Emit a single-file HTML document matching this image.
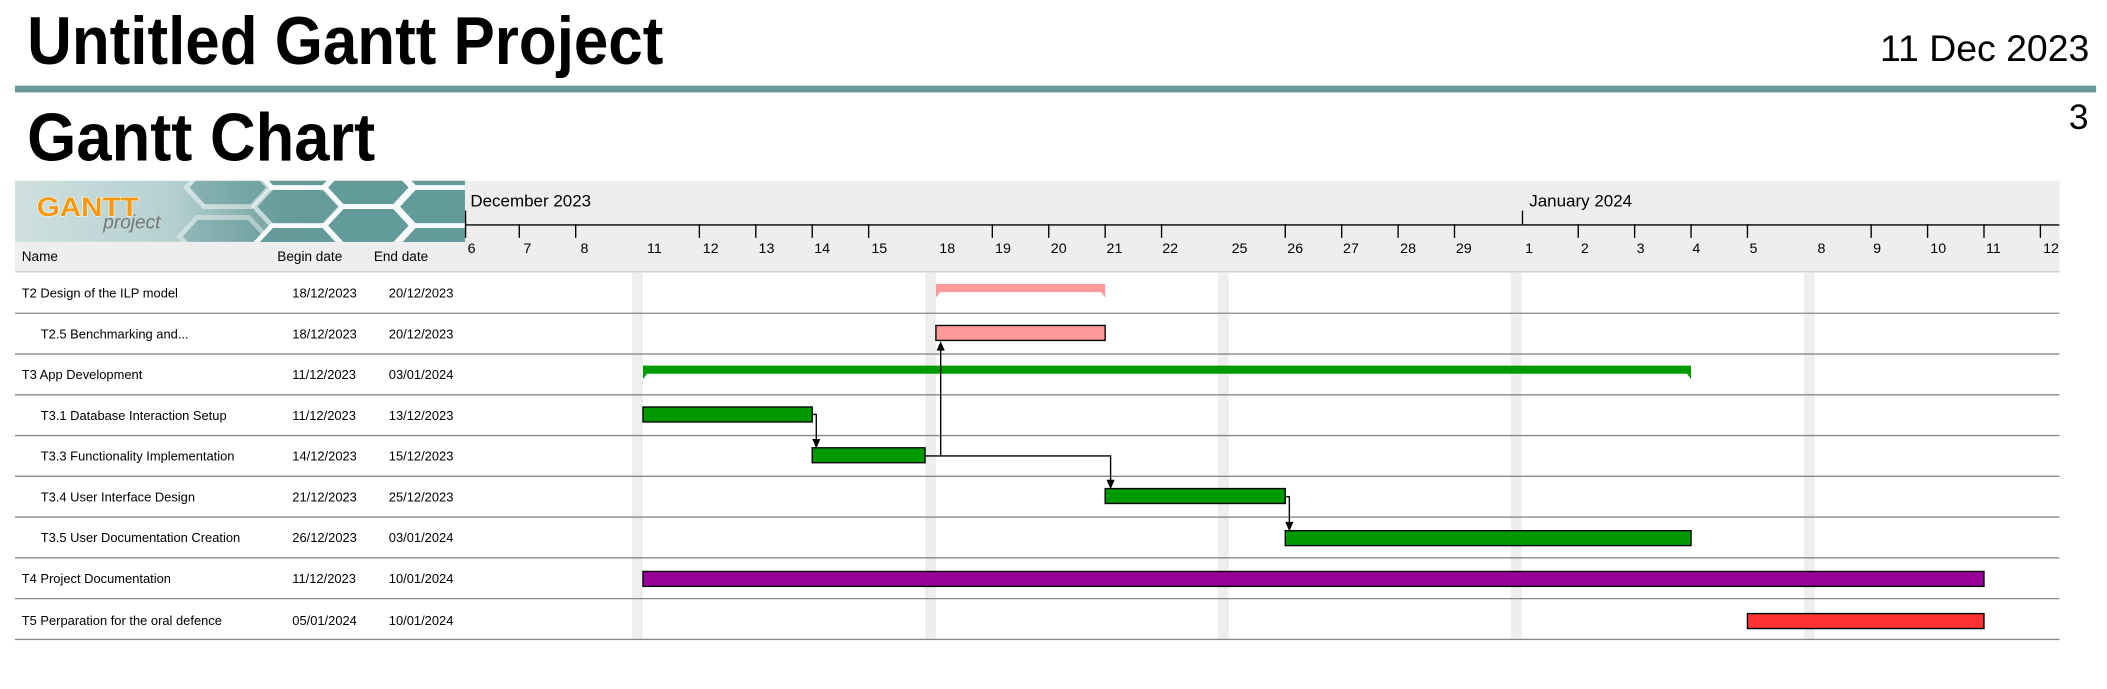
<!DOCTYPE html>
<html><head><meta charset="utf-8"><style>
html,body{margin:0;padding:0;background:#fff;width:2107px;height:689px;overflow:hidden}
svg{display:block}
text{font-family:"Liberation Sans",Arial,sans-serif}
</style></head><body>
<svg width="2107" height="689" viewBox="0 0 1550 507" preserveAspectRatio="none" xmlns="http://www.w3.org/2000/svg">
<defs>
<linearGradient id="lg" x1="0" x2="1" y1="0" y2="0">
<stop offset="0" stop-color="#cfe0e0"/><stop offset="0.35" stop-color="#b6d0d0"/><stop offset="0.6" stop-color="#6f9f9f"/><stop offset="1" stop-color="#629797"/></linearGradient>
<clipPath id="lc"><rect x="11" y="133" width="331" height="45"/></clipPath>
</defs>
<text x="20" y="47" font-size="50" font-weight="bold" textLength="468" lengthAdjust="spacingAndGlyphs">Untitled Gantt Project</text>
<text x="1383" y="45" font-size="27" textLength="154" lengthAdjust="spacingAndGlyphs">11 Dec 2023</text>
<rect x="11" y="63" width="1531" height="5" fill="#669999"/>
<text x="20" y="118" font-size="50" font-weight="bold" textLength="256" lengthAdjust="spacingAndGlyphs">Gantt Chart</text>
<text x="1522" y="95" font-size="26">3</text>
<rect x="11" y="133" width="1504" height="67" fill="#eeeeee"/>
<line x1="11" y1="200" x2="1515" y2="200" stroke="#cccccc" stroke-width="1"/>
<g clip-path="url(#lc)">
<rect x="11" y="133" width="331" height="45" fill="url(#lg)"/>
<g fill="#649a9a" stroke="#ffffff" stroke-width="3.5" opacity="0.95">
<polygon points="150,124 185,124 198,138 185,152 150,152 137,138" opacity="0.5"/>
<polygon points="200,138 238,138 251,152 238,166 200,166 187,152" opacity="0.6"/>
<polygon points="145,160 183,160 196,174 183,188 145,188 132,174" opacity="0.4"/>
<polygon points="252,124 290,124 303,138 290,152 252,152 239,138"/>
<polygon points="305,138 343,138 356,152 343,166 305,166 292,152"/>
<polygon points="252,152 290,152 303,166 290,180 252,180 239,166"/>
<polygon points="200,166 238,166 251,180 238,194 200,194 187,180"/>
<polygon points="200,110 238,110 251,124 238,138 200,138 187,124"/>
<polygon points="305,110 343,110 356,124 343,138 305,138 292,124"/>
<polygon points="305,166 343,166 356,180 343,194 305,194 292,180"/>
</g>
<text x="27" y="159" font-size="20" font-weight="bold" fill="#f59a10" stroke="#fff" stroke-width="0.8" paint-order="stroke" textLength="75" lengthAdjust="spacingAndGlyphs">GANTT</text>
<text x="76" y="168" font-size="14" font-style="italic" fill="#777" font-family="Liberation Serif,serif">project</text>
</g>
<text x="16" y="192" font-size="10">Name</text>
<text x="204" y="192" font-size="10">Begin date</text>
<text x="275" y="192" font-size="10">End date</text>
<text x="346" y="152" font-size="12.5">December 2023</text>
<text x="1125" y="152" font-size="12.5">January 2024</text>
<line x1="342" y1="165.5" x2="1515" y2="165.5" stroke="#000" stroke-width="1"/>
<line x1="342.5" y1="155" x2="342.5" y2="175" stroke="#000" stroke-width="1"/>
<line x1="1120" y1="155" x2="1120" y2="165" stroke="#000" stroke-width="1"/>
<g stroke="#000" stroke-width="1">
<line x1="382" y1="165" x2="382" y2="175"/><line x1="423.5" y1="165" x2="423.5" y2="175"/>
<line x1="514.5" y1="165" x2="514.5" y2="175"/><line x1="556" y1="165" x2="556" y2="175"/><line x1="597.5" y1="165" x2="597.5" y2="175"/><line x1="639" y1="165" x2="639" y2="175"/>
<line x1="730" y1="165" x2="730" y2="175"/><line x1="771.5" y1="165" x2="771.5" y2="175"/><line x1="813" y1="165" x2="813" y2="175"/><line x1="854.5" y1="165" x2="854.5" y2="175"/>
<line x1="945.5" y1="165" x2="945.5" y2="175"/><line x1="987" y1="165" x2="987" y2="175"/><line x1="1028.5" y1="165" x2="1028.5" y2="175"/><line x1="1070" y1="165" x2="1070" y2="175"/>
<line x1="1161" y1="165" x2="1161" y2="175"/><line x1="1202.5" y1="165" x2="1202.5" y2="175"/><line x1="1244" y1="165" x2="1244" y2="175"/><line x1="1285.5" y1="165" x2="1285.5" y2="175"/>
<line x1="1376.5" y1="165" x2="1376.5" y2="175"/><line x1="1418" y1="165" x2="1418" y2="175"/><line x1="1459.5" y1="165" x2="1459.5" y2="175"/><line x1="1501" y1="165" x2="1501" y2="175"/>
</g>
<g font-size="10.5">
<text x="344" y="186">6</text><text x="385" y="186">7</text><text x="427" y="186">8</text>
<text x="476" y="186">11</text><text x="517" y="186">12</text><text x="558" y="186">13</text><text x="599" y="186">14</text><text x="641" y="186">15</text>
<text x="691" y="186">18</text><text x="732" y="186">19</text><text x="773" y="186">20</text><text x="814" y="186">21</text><text x="855" y="186">22</text>
<text x="906" y="186">25</text><text x="947" y="186">26</text><text x="988" y="186">27</text><text x="1030" y="186">28</text><text x="1071" y="186">29</text>
<text x="1122" y="186">1</text><text x="1163" y="186">2</text><text x="1204" y="186">3</text><text x="1245" y="186">4</text><text x="1287" y="186">5</text>
<text x="1337" y="186">8</text><text x="1378" y="186">9</text><text x="1420" y="186">10</text><text x="1461" y="186">11</text><text x="1503" y="186">12</text>
</g>
<g fill="#eeeeee">
<rect x="465" y="201" width="8" height="269"/><rect x="680.5" y="201" width="8" height="269"/>
<rect x="896" y="201" width="8" height="269"/><rect x="1111.5" y="201" width="8" height="269"/><rect x="1327" y="201" width="8" height="269"/>
</g>
<g stroke="#888" stroke-width="1">
<line x1="11" y1="230.5" x2="1515" y2="230.5"/><line x1="11" y1="260.5" x2="1515" y2="260.5"/>
<line x1="11" y1="290.5" x2="1515" y2="290.5"/><line x1="11" y1="320.5" x2="1515" y2="320.5"/>
<line x1="11" y1="350.5" x2="1515" y2="350.5"/><line x1="11" y1="380.5" x2="1515" y2="380.5"/>
<line x1="11" y1="410.5" x2="1515" y2="410.5"/><line x1="11" y1="440.5" x2="1515" y2="440.5"/>
<line x1="11" y1="470.5" x2="1515" y2="470.5"/>
</g>
<g font-size="9.5">
<text x="16" y="219">T2 Design of the ILP model</text><text x="215" y="219">18/12/2023</text><text x="286" y="219">20/12/2023</text>
<text x="30" y="249">T2.5 Benchmarking and...</text><text x="215" y="249">18/12/2023</text><text x="286" y="249">20/12/2023</text>
<text x="16" y="279">T3 App Development</text><text x="215" y="279">11/12/2023</text><text x="286" y="279">03/01/2024</text>
<text x="30" y="309">T3.1 Database Interaction Setup</text><text x="215" y="309">11/12/2023</text><text x="286" y="309">13/12/2023</text>
<text x="30" y="339">T3.3 Functionality Implementation</text><text x="215" y="339">14/12/2023</text><text x="286" y="339">15/12/2023</text>
<text x="30" y="369">T3.4 User Interface Design</text><text x="215" y="369">21/12/2023</text><text x="286" y="369">25/12/2023</text>
<text x="30" y="399">T3.5 User Documentation Creation</text><text x="215" y="399">26/12/2023</text><text x="286" y="399">03/01/2024</text>
<text x="16" y="429">T4 Project Documentation</text><text x="215" y="429">11/12/2023</text><text x="286" y="429">10/01/2024</text>
<text x="16" y="460">T5 Perparation for the oral defence</text><text x="215" y="460">05/01/2024</text><text x="286" y="460">10/01/2024</text>
</g>
<polygon points="688.5,209 813,209 813,219 810,215 691.5,215 688.5,219" fill="#ff9999"/>
<rect x="688.5" y="239.5" width="124.5" height="11" fill="#ff9999" stroke="#000" stroke-width="1"/>
<polygon points="473,269 1244,269 1244,279 1241,275 476,275 473,279" fill="#009900"/>
<rect x="473" y="299.5" width="124.5" height="11" fill="#009900" stroke="#000" stroke-width="1"/>
<rect x="597.5" y="329.5" width="83" height="11" fill="#009900" stroke="#000" stroke-width="1"/>
<rect x="813" y="359.5" width="132.5" height="11" fill="#009900" stroke="#000" stroke-width="1"/>
<rect x="945.5" y="390.5" width="298.5" height="11" fill="#009900" stroke="#000" stroke-width="1"/>
<rect x="473" y="420.5" width="986.5" height="11" fill="#990099" stroke="#000" stroke-width="1"/>
<rect x="1285.5" y="451.5" width="174" height="11" fill="#ff3333" stroke="#000" stroke-width="1"/>
<g stroke="#000" stroke-width="1" fill="none">
<polyline points="597.5,305 600.5,305 600.5,325"/>
<polyline points="680.5,335.5 692,335.5 692,256"/>
<polyline points="692,335.5 817,335.5 817,355"/>
<polyline points="945.5,365.5 948.5,365.5 948.5,386"/>
</g>
<g fill="#000">
<polygon points="597.5,323 603.5,323 600.5,330"/>
<polygon points="689,258 695,258 692,251"/>
<polygon points="814,353 820,353 817,360"/>
<polygon points="945.5,384 951.5,384 948.5,391"/>
</g>
</svg>
</body></html>
